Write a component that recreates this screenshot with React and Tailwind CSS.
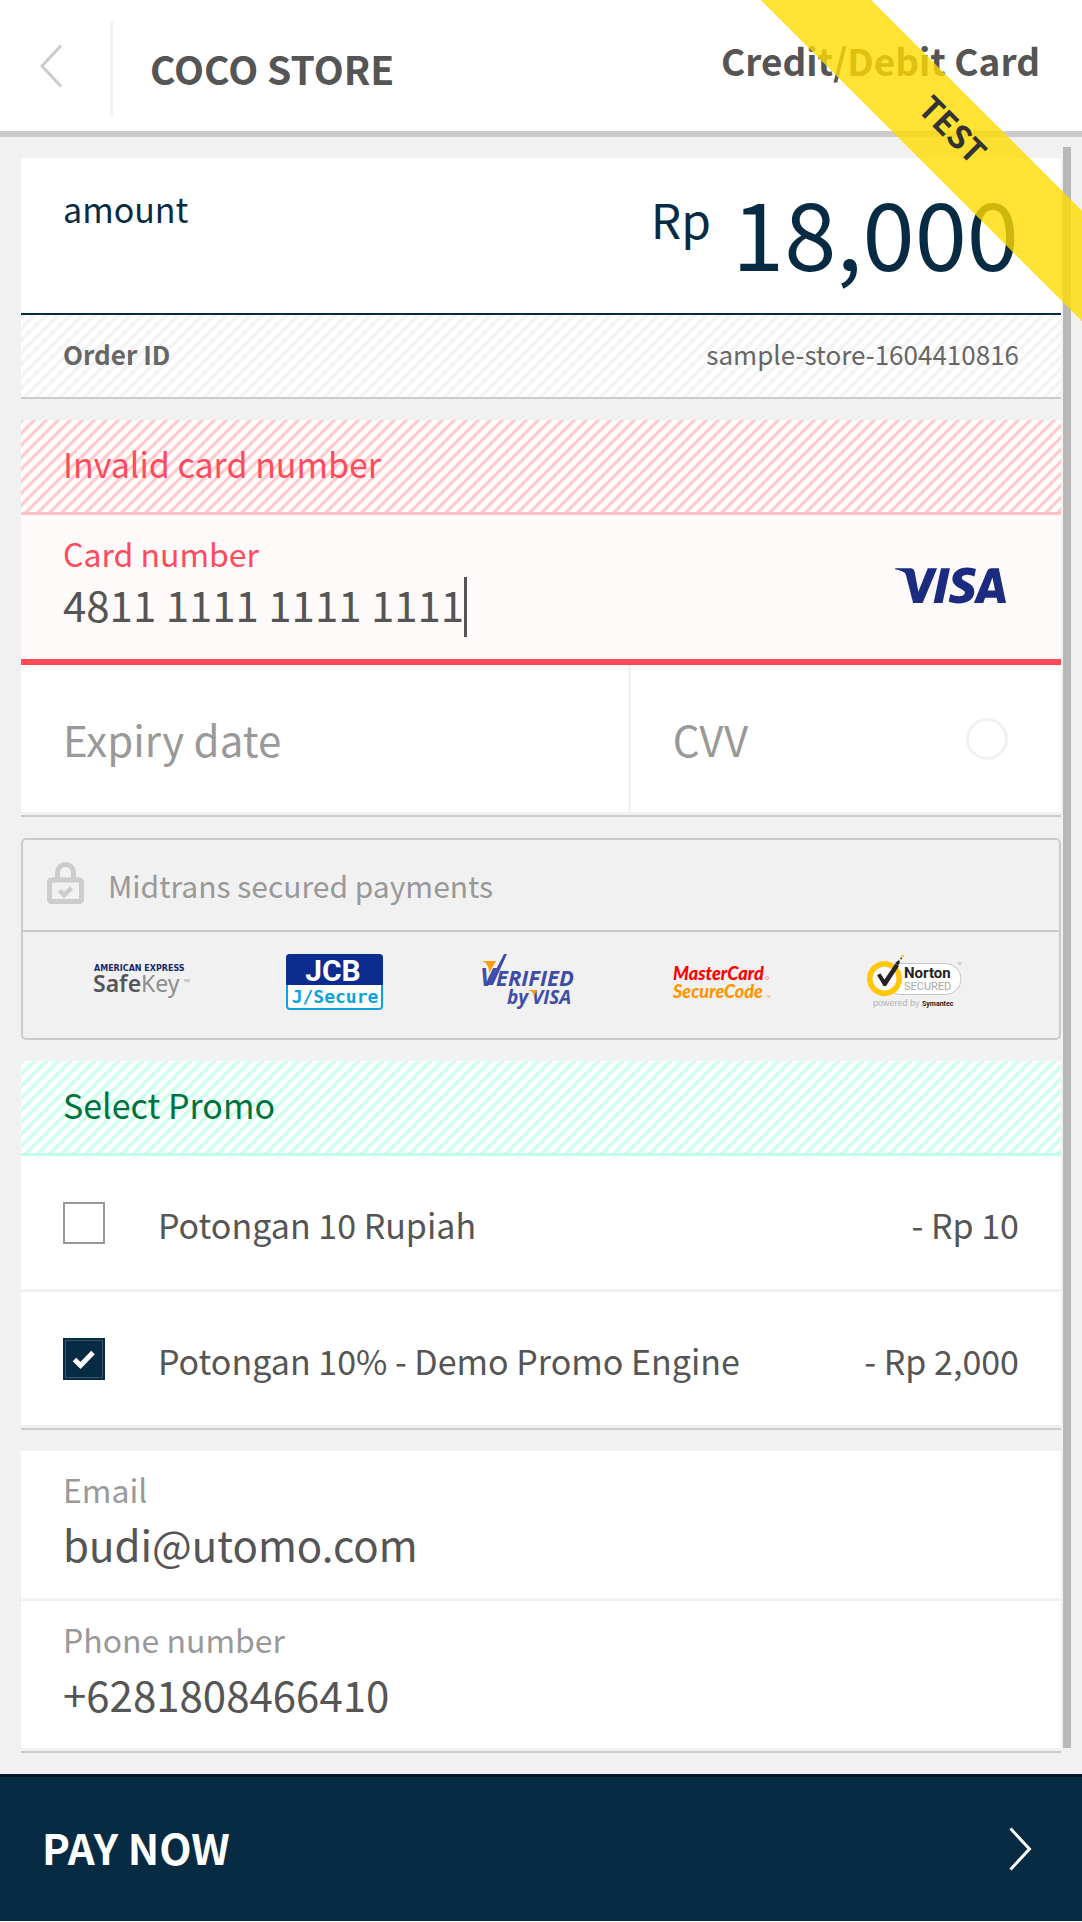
import React, { useState } from "react";
import { SiVisa } from "react-icons/si";

const STRIPES_GRAY =
  "bg-[linear-gradient(135deg,#f3f3f3_12%,#fff_20%,#fff_42%,#f3f3f3_50%,#f3f3f3_62%,#fff_70%,#fff_92%,#f3f3f3_100%)] bg-[length:12px_12px]";
const STRIPES_RED =
  "bg-[linear-gradient(135deg,#ffccce_12%,#fff_20%,#fff_42%,#ffccce_50%,#ffccce_62%,#fff_70%,#fff_92%,#ffccce_100%)] bg-[length:12px_12px]";
const STRIPES_GREEN =
  "bg-[linear-gradient(135deg,#ccffec_12%,#fff_20%,#fff_42%,#ccffec_50%,#ccffec_62%,#fff_70%,#fff_92%,#ccffec_100%)] bg-[length:12px_12px]";

const promos = [
  { id: "promo-10", label: "Potongan 10 Rupiah", value: "- Rp 10", checked: false },
  { id: "promo-demo", label: "Potongan 10% - Demo Promo Engine", value: "- Rp 2,000", checked: true },
];

function Header() {
  return (
    <header className="flex border-b-[6px] border-[#cccccc] bg-white">
      <button type="button" aria-label="Back" className="mt-[21px] mb-[15px] flex h-[95px] w-[113px] shrink-0 items-center justify-start border-r-[3px] border-[#f1f1f1] pb-[6px] pl-[40px]">
        <svg width="22" height="44" viewBox="0 0 22 44" fill="none" stroke="#cccccc" strokeWidth="3">
          <path d="M21 1.5 2 22l19 20.500" />
        </svg>
      </button>
      <div className="flex flex-1 items-center justify-between pr-[42px] pl-[37px]">
        <h1 className="pt-1 text-[39px] leading-[48px] font-bold">COCO STORE</h1>
        <h2 className="pb-3 text-[37px] leading-[48px] font-bold">Credit/Debit Card</h2>
      </div>
    </header>
  );
}

function Ribbon() {
  return (
    <div className="pointer-events-none absolute top-0 right-0 h-[321px] w-[321px] overflow-hidden">
      <div className="absolute top-[94px] -left-[112px] h-[78px] w-[600px] rotate-45 bg-[#ffdb00]/80 pb-[14px] text-center text-[32px] leading-[64px] font-bold text-[#333333]">
        TEST
      </div>
    </div>
  );
}

function AmountCard() {
  return (
    <section className="border-b-2 border-[#cccccc] bg-white">
      <div className="flex items-start justify-between border-b-2 border-[#072b43] px-[42px] pt-6 pb-[35px] text-[#072b43]">
        <span className="text-[34px] leading-[54px]">amount</span>
        <span className="flex items-start gap-[21px]">
          <span className="text-[48px] leading-[72px]">Rp</span>
          <span className="text-[94px] leading-[96px]">18,000</span>
        </span>
      </div>
      <div className={`flex justify-between px-[42px] pt-[22px] pb-[26px] text-[26px] leading-[34px] text-[#666666] ${STRIPES_GRAY}`}>
        <span className="font-bold">Order ID</span>
        <span>sample-store-1604410816</span>
      </div>
    </section>
  );
}

function CardForm() {
  const [number, setNumber] = useState("4811 1111 1111 1111");
  return (
    <section className="border-b-2 border-[#cccccc] bg-white">
      <p role="alert" className={`border-b-[3px] border-[#ffc2c6] px-[42px] pt-5 pb-6 text-[34px] leading-[48px] text-[#ff4a5c] ${STRIPES_RED}`}>
        Invalid card number
      </p>
      <div className="flex items-center justify-between border-b-[6px] border-[#ff4a5c] bg-[#fffafa] pr-[53px] pl-[42px]">
        <div className="pt-[14px] pb-[22px]">
          <label htmlFor="card-number" className="block text-[32px] leading-[48px] text-[#ff4a5c]">
            Card number
          </label>
          <div className="flex items-center">
            <input
              id="card-number"
              value={number}
              onChange={(e) => setNumber(e.target.value)}
              className="h-[60px] [field-sizing:content] bg-transparent pb-2 text-[42px] leading-[52px] outline-none"
            />
            <span className="h-[60px] w-[3px] bg-[#555555]" />
          </div>
        </div>
        <SiVisa title="Visa" className="size-[115px] pb-1 text-[#1a2b80]" />
      </div>
      <div className="flex border-b-[3px] border-[#f1f1f1]">
        <input
          aria-label="Expiry date"
          placeholder="Expiry date"
          className="h-[147px] w-7/12 pl-[42px] text-[42px] outline-none placeholder:text-[#999999]"
        />
        <div className="flex w-5/12 items-center justify-between border-l-[3px] border-[#f1f1f1] pr-[53px]">
          <input
            aria-label="CVV"
            placeholder="CVV"
            className="h-[147px] min-w-0 flex-1 pl-[42px] text-[42px] outline-none placeholder:text-[#999999]"
          />
          <button type="button" aria-label="About the CVV" className="size-[42px] rounded-full border-[3px] border-[#f1f1f1]" />
        </div>
      </div>
    </section>
  );
}

function SafeKeyLogo() {
  return (
    <svg width="96" height="56" viewBox="0 0 96 56" className="overflow-visible">
      <text x="0" y="17" fontSize="8" fontWeight="700" fontFamily="'DejaVu Sans'" fill="#16286b">AMERICAN EXPRESS</text>
      <text x="-1" y="38" fontSize="23" fontFamily="'Noto Sans'" fill="#55565a">
        <tspan fontWeight="600">Safe</tspan><tspan fill="#8d8e91">Key</tspan>
      </text>
      <text x="90" y="28" fontSize="4" fontFamily="'Noto Sans'" fill="#8d8e91">SM</text>
    </svg>
  );
}

function JcbLogo() {
  return (
    <svg width="97" height="56" viewBox="0 0 97 56" className="overflow-visible">
      <rect x="1" y="1" width="95" height="54" rx="3" fill="#fff" stroke="#0ba3e0" strokeWidth="2" />
      <path d="M0 31V4a4 4 0 0 1 4-4h89a4 4 0 0 1 4 4v27z" fill="#0c2d8f" />
      <text x="47" y="27" fontSize="30" fontWeight="700" fontFamily="Roboto" fill="#fff" textAnchor="middle">JCB</text>
      <text x="49" y="49" fontSize="18" fontWeight="700" fontFamily="'DejaVu Sans Mono'" fill="#0ba3e0" textAnchor="middle">J/Secure</text>
    </svg>
  );
}

function VerifiedByVisaLogo() {
  return (
    <svg width="96" height="56" viewBox="0 0 96 56" className="overflow-visible">
      <g fill="#3f4da8" fontFamily="'Open Sans'" fontWeight="700" fontStyle="italic">
        <text x="0" y="32" fontSize="25">V</text>
        <text x="16" y="32" fontSize="22">ERIFIED</text>
        <text x="27" y="50" fontSize="19">by</text>
        <text x="52" y="50" fontSize="19">VISA</text>
        <path d="M8 31 24 0h3L13 31z" />
      </g>
      <path d="M2 7h14l-7 12c0-7-2-10-7-12z" fill="#ff9a0a" />
      <path d="M48 36h9l-3 6c-1-4-3-5-6-6z" fill="#ff9a0a" />
    </svg>
  );
}

function SecureCodeLogo() {
  return (
    <svg width="97" height="56" viewBox="0 0 97 56" className="overflow-visible">
      <g fontFamily="Lato" fontWeight="900" fontStyle="italic">
        <text x="0" y="26" fontSize="18" fill="#ff0000">MasterCard</text>
        <text x="0" y="44" fontSize="18" fill="#ff9500">SecureCode</text>
      </g>
      <circle cx="94" cy="24" r="1.500" fill="none" stroke="#ff6666" strokeWidth="0.600" />
      <text x="93" y="44" fontSize="3" fontFamily="'Noto Sans'" fill="#ff9500">TM</text>
    </svg>
  );
}

function NortonLogo() {
  return (
    <svg width="97" height="56" viewBox="0 0 97 56" className="overflow-visible">
      <rect x="19" y="9.500" width="76" height="31" rx="15.500" fill="#fff" stroke="#c4c4c4" />
      <circle cx="18.500" cy="24.700" r="14.700" fill="#fff" stroke="#ffc60a" strokeWidth="5.600" />
      <path d="m11 21 3.500-1.500 4 6L29 10l4 2-13 20h-2.500z" fill="#262223" />
      <path d="m29 9 4-3 1 2-2 4zM34 4l2-1-.5 3z" fill="#262223" />
      <path d="m35 2 3-2-.5 3-2 1z" fill="#ffc60a" />
      <text x="38" y="24" fontSize="15" fontWeight="700" fontFamily="Roboto" fill="#262223">Norton</text>
      <text x="38" y="36" fontSize="11" fontFamily="Roboto" fill="#a8a8a8">SECURED</text>
      <text x="91" y="11" fontSize="3" fontFamily="'Noto Sans'" fill="#a8a8a8">TM</text>
      <text x="7" y="52" fontSize="9" fontFamily="'Liberation Sans'" fill="#b4b4b4">powered by</text>
      <text x="56" y="52" fontSize="7" fontWeight="700" fontFamily="Roboto" fill="#262223">Symantec</text>
    </svg>
  );
}

function SecuredPayments() {
  return (
    <section className="rounded-[5px] border-2 border-[#cccccc]">
      <div className="flex h-[92px] items-center gap-6 border-b-2 border-[#cccccc] pl-6">
        <svg width="37" height="42" viewBox="0 0 37 42" className="mb-1" fill="none" stroke="#cccccc">
          <rect x="2.500" y="18" width="32" height="21.500" rx="2" strokeWidth="5" />
          <path d="M10.500 17v-6.500a8 8 0 0 1 16 0V17" strokeWidth="5" />
          <path d="m12.500 28.500 4.500 4.500 7.500-7" strokeWidth="4.500" />
        </svg>
        <p className="text-[30px] leading-[48px] text-[#999999]">Midtrans secured payments</p>
      </div>
      <div className="grid grid-cols-5 justify-items-center pt-[22px] pr-12 pb-7 pl-[22px]">
        <SafeKeyLogo />
        <JcbLogo />
        <VerifiedByVisaLogo />
        <SecureCodeLogo />
        <NortonLogo />
      </div>
    </section>
  );
}

function PromoRow({ promo }) {
  const [checked, setChecked] = useState(promo.checked);
  return (
    <li className="flex items-center border-b-[3px] border-[#f1f1f1] px-[42px] pt-[46px] pb-[41px] text-[34px] leading-[46px]">
      <span className="relative mb-1 size-[42px] shrink-0">
        <input
          id={promo.id}
          type="checkbox"
          checked={checked}
          onChange={(e) => setChecked(e.target.checked)}
          className="peer block size-[42px] appearance-none border-2 border-[#999999] checked:border-[#072b43] checked:bg-[#072b43] checked:shadow-[inset_0_0_0_1px_#3a566a]"
        />
        <svg width="42" height="42" viewBox="0 0 42 42" className="pointer-events-none absolute inset-0 hidden peer-checked:block" fill="none" stroke="#fff" strokeWidth="5">
          <path d="m11.500 21.500 6 6 12.500-13" />
        </svg>
      </span>
      <label htmlFor={promo.id} className="flex-1 pl-[53px]">{promo.label}</label>
      <span>{promo.value}</span>
    </li>
  );
}

function PromoCard() {
  return (
    <section className="border-b-2 border-[#cccccc] bg-white">
      <h3 className={`border-b-[3px] border-[#bfffe8] px-[42px] pt-5 pb-6 text-[34px] leading-[48px] text-[#00733c] ${STRIPES_GREEN}`}>
        Select Promo
      </h3>
      <ul>
        {promos.map((promo) => (
          <PromoRow key={promo.id} promo={promo} />
        ))}
      </ul>
    </section>
  );
}

function ContactField({ id, label, type, initial }) {
  const [value, setValue] = useState(initial);
  return (
    <div className="border-b-[3px] border-[#f1f1f1] px-[42px] pt-[14px] pb-[25px]">
      <label htmlFor={id} className="block text-[32px] leading-[48px] text-[#999999]">{label}</label>
      <input
        id={id}
        type={type}
        value={value}
        onChange={(e) => setValue(e.target.value)}
        className="block h-[60px] w-full text-[42px] outline-none"
      />
    </div>
  );
}

function ContactCard() {
  return (
    <section className="border-b-2 border-[#cccccc] bg-white">
      <ContactField id="email" label="Email" type="email" initial="budi@utomo.com" />
      <ContactField id="phone" label="Phone number" type="tel" initial="+6281808466410" />
    </section>
  );
}

export default function App() {
  return (
    <div className="relative overflow-hidden bg-[#f1f1f1] font-['Noto_Sans_CJK_SC',sans-serif] text-[#555555]">
      <Header />
      <main className="relative flex flex-col gap-[21px] p-[21px]">
        <AmountCard />
        <CardForm />
        <SecuredPayments />
        <PromoCard />
        <ContactCard />
        <div className="absolute top-[10px] right-[11px] bottom-[26px] w-2 bg-[#b8b8b8]" />
      </main>
      <button type="button" className="flex h-[147px] w-full items-center justify-between border-t-[3px] border-[#031627] bg-[#072b43] pr-[50px] pl-[42px] text-white">
        <span className="pb-1 text-[42px] leading-[60px] font-bold">PAY NOW</span>
        <svg width="23" height="44" viewBox="0 0 23 44" fill="none" stroke="#fff" strokeWidth="3">
          <path d="m1.500 1.500 19 20.500-19 20.500" />
        </svg>
      </button>
      <Ribbon />
    </div>
  );
}
